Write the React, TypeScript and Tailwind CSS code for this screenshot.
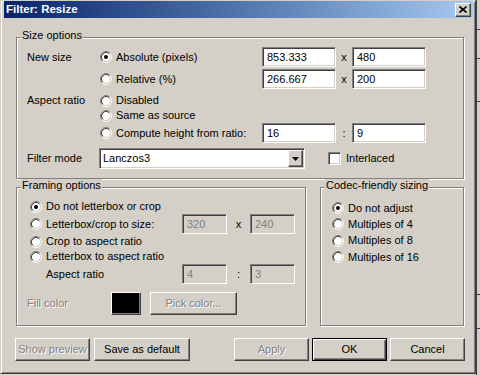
import React from "react";

const sunken =
  "border border-t-[#808080] border-l-[#808080] border-b-white border-r-white shadow-[inset_1px_1px_0_#404040,inset_-1px_-1px_0_#d4d0c8]";
const raised =
  "border border-t-white border-l-white border-b-[#404040] border-r-[#404040] shadow-[inset_-1px_-1px_0_#808080]";
const etched = "relative border border-[#808080] shadow-[inset_1px_1px_0_#fff,1px_1px_0_#fff]";
const disabledText = "text-[#808080] [text-shadow:1px_1px_0_#fff]";

function Radio({ checked }: { checked?: boolean }) {
  return (
    <svg width="12" height="12" viewBox="0 0 12 12" className="shrink-0">
      <circle cx="6" cy="6" r="4" fill="#fff" />
      <path d="M2.11 9.89A5.5 5.5 0 0 1 9.89 2.11" fill="none" stroke="#808080" />
      <path d="M9.89 2.11A5.5 5.5 0 0 1 2.11 9.89" fill="none" stroke="#fff" />
      <path d="M2.82 9.18A4.5 4.5 0 0 1 9.18 2.82" fill="none" stroke="#404040" />
      <path d="M9.18 2.82A4.5 4.5 0 0 1 2.82 9.18" fill="none" stroke="#d4d0c8" />
      {checked && <circle cx="6" cy="6" r="2" fill="#000" />}
    </svg>
  );
}

function Option({ label, checked, className = "" }: { label: string; checked?: boolean; className?: string }) {
  return (
    <div className={`flex items-center gap-[4px] ${className}`}>
      <Radio checked={checked} />
      <span className="whitespace-nowrap">{label}</span>
    </div>
  );
}

function Field({ value, w, disabled }: { value: string; w: string; disabled?: boolean }) {
  return (
    <div
      className={`${sunken} ${w} h-[20px] pl-[4px] flex items-center ${
        disabled ? "bg-[#d4d0c8] text-[#808080]" : "bg-white text-black"
      }`}
    >
      {value}
    </div>
  );
}

function GroupLabel({ text }: { text: string }) {
  return (
    <span className="absolute top-[-9px] left-[4px] px-[1px] bg-[#d4d0c8] whitespace-nowrap">{text}</span>
  );
}

function Button({ label, w, disabled, isDefault }: { label: string; w: string; disabled?: boolean; isDefault?: boolean }) {
  const frame = isDefault
    ? "border border-black shadow-[inset_1px_1px_0_#fff,inset_-1px_-1px_0_#404040,inset_-2px_-2px_0_#808080]"
    : raised;
  return (
    <div className={`${frame} ${w} h-[23px] flex items-center justify-center whitespace-nowrap ${disabled ? disabledText : ""}`}>
      {label}
    </div>
  );
}

export default function App() {
  return (
    <div className="w-[480px] h-[375px] bg-[#d4d0c8] flex overflow-hidden text-[11px] leading-[13px] text-black font-['Liberation_Sans',Arial,sans-serif]">
      <div className="w-[476px] h-[374px] shrink-0 border border-t-[#d4d0c8] border-l-[#d4d0c8] border-r-[#404040] border-b-[#404040] shadow-[inset_1px_1px_0_#fff,inset_-1px_-1px_0_#808080] pl-[3px] pr-[2px] flex flex-col">
        {/* title bar */}
        <div className="h-[17px] shrink-0 bg-linear-to-r from-[#0a246a] to-[#a6caf0] flex items-center justify-between pl-[2px] pr-[2px]">
          <span className="text-white font-bold text-[11.5px]">Filter: Resize</span>
          <div className={`${raised} bg-[#d4d0c8] w-[16px] h-[14px] flex items-center justify-center`}>
            <svg width="8" height="7" viewBox="0 0 8 7">
              <path d="M0.5 0.5L7.5 6.5M7.5 0.5L0.5 6.5" stroke="#000" strokeWidth="1.6" />
            </svg>
          </div>
        </div>

        {/* size options */}
        <div className={`${etched} ml-[12px] mt-[19px] w-[448px] h-[142px] shrink-0 pt-[9px] pl-[10px]`}>
          <GroupLabel text="Size options" />
          <div className="flex items-center h-[20px]">
            <span className="w-[73px]">New size</span>
            <Option label="Absolute (pixels)" checked className="w-[162px]" />
            <Field value="853.333" w="w-[74px]" />
            <span className="w-[16px] text-center">x</span>
            <Field value="480" w="w-[74px]" />
          </div>
          <div className="flex items-center h-[20px] mt-[2px]">
            <span className="w-[73px]" />
            <Option label="Relative (%)" className="w-[162px]" />
            <Field value="266.667" w="w-[74px]" />
            <span className="w-[16px] text-center">x</span>
            <Field value="200" w="w-[74px]" />
          </div>
          <div className="flex items-center h-[15px] mt-[4px]">
            <span className="w-[73px]">Aspect ratio</span>
            <Option label="Disabled" />
          </div>
          <div className="flex items-center h-[15px]">
            <span className="w-[73px]" />
            <Option label="Same as source" />
          </div>
          <div className="flex items-center h-[20px]">
            <span className="w-[73px]" />
            <Option label="Compute height from ratio:" className="w-[162px]" />
            <Field value="16" w="w-[74px]" />
            <span className="w-[16px] text-center">:</span>
            <Field value="9" w="w-[74px]" />
          </div>
          <div className="flex items-center h-[21px] mt-[5px]">
            <span className="w-[72px]">Filter mode</span>
            <div className={`${sunken} bg-white w-[206px] h-[21px] flex items-center justify-between pl-[3px] pr-[1px]`}>
              <span>Lanczos3</span>
              <div className={`${raised} bg-[#d4d0c8] w-[15px] h-[17px] flex items-center justify-center`}>
                <svg width="7" height="4" viewBox="0 0 7 4">
                  <path d="M0 0h7L3.5 4z" fill="#000" />
                </svg>
              </div>
            </div>
            <div className={`${sunken} bg-white w-[13px] h-[13px] ml-[23px]`} />
            <span className="ml-[5px]">Interlaced</span>
          </div>
        </div>

        <div className="flex mt-[8px] ml-[12px] shrink-0">
          {/* framing options */}
          <div className={`${etched} w-[290px] h-[139px] pt-[11px] pl-[10px]`}>
            <GroupLabel text="Framing options" />
            <div className="flex items-center h-[15px] pl-[3px]">
              <Option label="Do not letterbox or crop" checked />
            </div>
            <div className="flex items-center h-[20px] pl-[3px]">
              <Option label="Letterbox/crop to size:" className="w-[152px]" />
              <Field value="320" w="w-[45px]" disabled />
              <span className="w-[23px] text-center">x</span>
              <Field value="240" w="w-[45px]" disabled />
            </div>
            <div className="flex items-center h-[15px] pl-[3px]">
              <Option label="Crop to aspect ratio" />
            </div>
            <div className="flex items-center h-[15px] pl-[3px]">
              <Option label="Letterbox to aspect ratio" />
            </div>
            <div className="flex items-center h-[20px] pl-[3px]">
              <span className="w-[152px] pl-[16px]">Aspect ratio</span>
              <Field value="4" w="w-[45px]" disabled />
              <span className="w-[23px] text-center">:</span>
              <Field value="3" w="w-[45px]" disabled />
            </div>
            <div className="flex items-center h-[23px] mt-[8px]">
              <span className={`w-[84px] ${disabledText}`}>Fill color</span>
              <div className={`${raised} bg-black w-[30px] h-[23px]`} />
              <div className="ml-[9px]">
                <Button label="Pick color..." w="w-[87px]" disabled />
              </div>
            </div>
          </div>

          {/* codec-friendly sizing */}
          <div className={`${etched} ml-[14px] w-[144px] h-[139px] pt-[12px] pl-[11px]`}>
            <GroupLabel text="Codec-friendly sizing" />
            <Option label="Do not adjust" checked className="h-[16px]" />
            <Option label="Multiples of 4" className="h-[16px]" />
            <Option label="Multiples of 8" className="h-[17px]" />
            <Option label="Multiples of 16" className="h-[16px]" />
          </div>
        </div>

        {/* buttons */}
        <div className="flex mt-[12px] ml-[11px] shrink-0">
          <Button label="Show preview" w="w-[75px]" disabled />
          <div className="ml-[4px]">
            <Button label="Save as default" w="w-[96px]" />
          </div>
          <div className="ml-[44px]">
            <Button label="Apply" w="w-[75px]" disabled />
          </div>
          <div className="ml-[3px]">
            <Button label="OK" w="w-[75px]" isDefault />
          </div>
          <div className="ml-[3px]">
            <Button label="Cancel" w="w-[75px]" />
          </div>
        </div>
      </div>

      {/* edge of the window behind */}
      <div className="w-[4px] h-[375px] shrink-0 border-l border-[#404040] flex flex-col">
        <div className="h-[29px]" />
        <div className="h-px bg-[#404040]" />
        <div className="h-[28px]" />
        <div className="h-px bg-[#404040]" />
        <div className="h-[42px]" />
        <div className="h-px bg-[#404040]" />
        <div className="h-[192px]" />
        <div className="h-px bg-[#404040]" />
        <div className="h-[33px]" />
        <div className="h-px bg-[#404040]" />
      </div>
    </div>
  );
}
